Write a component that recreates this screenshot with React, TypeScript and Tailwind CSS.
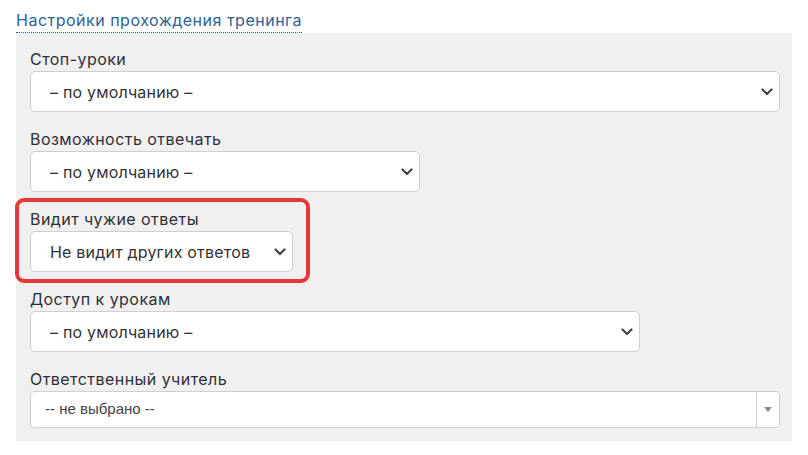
import React from "react";

const Chevron = () => (
  <svg width="12" height="8" viewBox="0 0 12 8" className="shrink-0">
    <polyline points="1.5,1.5 6,6 10.5,1.5" fill="none" stroke="#444" strokeWidth="2.2" strokeLinecap="round" strokeLinejoin="round" />
  </svg>
);

const Select = ({ text, width }: { text: string; width: string }) => (
  <div className={`${width} h-[41px] flex items-center justify-between bg-white border border-[#cfcfcf] rounded-[5px] pl-[19px] pr-[6px] text-[16px] tracking-[0.2px] text-[#333] leading-none`}>
    <span>{text}</span>
    <Chevron />
  </div>
);

const Field = ({ label, children }: { label: string; children: React.ReactNode }) => (
  <div className="flex flex-col">
    <div className="h-[24px] leading-[24px] text-[16px] tracking-[0.45px] text-[#2f2f38]">{label}</div>
    {children}
  </div>
);

export default function App() {
  return (
    <div className="w-[808px] h-[455px] bg-white pt-[8px] pl-[16px]" style={{ fontFamily: "Inter, 'Noto Sans', sans-serif" }}>
      <div className="inline-block text-[16px] leading-[23px] tracking-[0.5px] text-[#2a6394] border-b border-dotted border-[#2a6394]">
        Настройки прохождения тренинга
      </div>
      <div className="w-[776px] bg-[#f0f0f0] pt-[14px] pb-[13px] pl-[14px] pr-[12px] flex flex-col gap-[15px]">
        <Field label="Стоп-уроки">
          <Select text="– по умолчанию –" width="w-[750px]" />
        </Field>
        <Field label="Возможность отвечать">
          <Select text="– по умолчанию –" width="w-[390px]" />
        </Field>
        <div className="relative">
          <Field label="Видит чужие ответы">
            <Select text="Не видит других ответов" width="w-[263px]" />
          </Field>
          <div className="absolute left-[-15px] top-[-9px] w-[295px] h-[85px] border-[4px] border-[#e53935] rounded-[9px] pointer-events-none" />
        </div>
        <Field label="Доступ к урокам">
          <Select text="– по умолчанию –" width="w-[610px]" />
        </Field>
        <Field label="Ответственный учитель">
          <div className="w-[750px] h-[37px] flex items-stretch bg-white border border-[#cfcfcf] rounded-[4px]">
            <div className="flex-1 flex items-center pl-[14px] text-[15px] text-[#444]" style={{ fontFamily: "'Liberation Sans', Arial, sans-serif" }}>
              -- не выбрано --
            </div>
            <div className="w-[23px] border-l border-[#cfcfcf] flex items-center justify-center">
              <svg width="8" height="5" viewBox="0 0 8 5">
                <polygon points="0,0 8,0 4,5" fill="#888" />
              </svg>
            </div>
          </div>
        </Field>
      </div>
    </div>
  );
}
